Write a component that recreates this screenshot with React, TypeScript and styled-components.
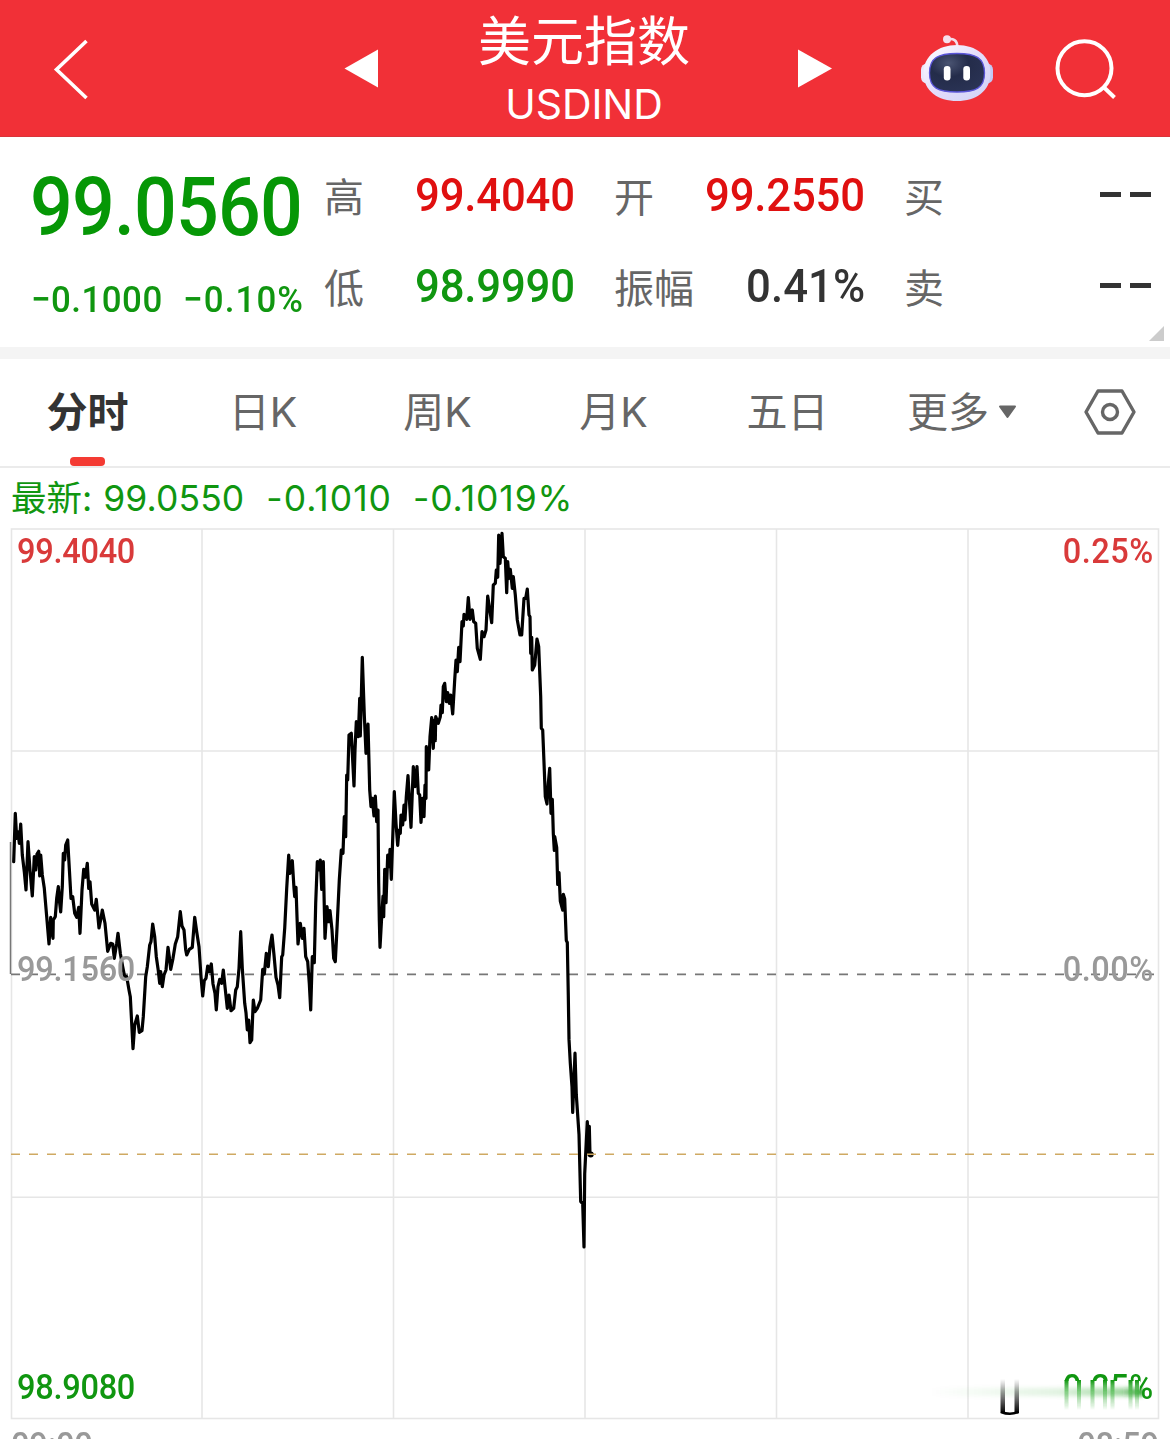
import React from "react";
import styled, { createGlobalStyle } from "styled-components";

const cjk = `"Noto Sans CJK SC", sans-serif`;

const GlobalStyle = createGlobalStyle`
  * { box-sizing: border-box; }
  body { margin: 0; background: #fff; }
  svg { display: block; flex: none; }
`;

const Screen = styled.main`
  width: 1170px;
  height: 1439px;
  overflow: hidden;
  background: #fff;
  font-family: Inter, ${cjk};
`;

/* ---------- header ---------- */
const Header = styled.header`
  height: 137px;
  background: #f13037;
  border-bottom: 1px solid #d9343a;
  color: #fff;
  display: grid;
  grid-template-columns: 344px 35px 1fr 35px 338px;
  align-items: center;
`;
const HeaderSide = styled.div<{ $pad: number; $gap?: number }>`
  display: flex;
  align-items: center;
  padding-left: ${(p) => p.$pad}px;
  gap: ${(p) => p.$gap ?? 0}px;
`;
const TitleBlock = styled.div`
  height: 136px;
  display: flex;
  flex-direction: column;
  align-items: center;
  padding-right: 8px;
`;
const Title = styled.h1`
  margin: 6px 0 0;
  font: 400 53px/64px ${cjk};
`;
const Ticker = styled.div`
  margin-top: 9px;
  font: 400 41px/50px Inter, sans-serif;
  letter-spacing: -0.1px;
`;

/* ---------- quote ---------- */
/* Condensed figures: Roboto squeezed horizontally. */
const squeeze = 0.93;
const Num = styled.span<{ $size: number; $color: string; $track?: number; $from?: "left" | "right" }>`
  display: inline-block;
  font-family: Roboto, sans-serif;
  font-weight: 500;
  font-size: ${(p) => p.$size}px;
  line-height: 1;
  color: ${(p) => p.$color};
  letter-spacing: ${(p) => p.$track ?? 0}px;
  white-space: pre;
  transform: scaleX(${squeeze});
  transform-origin: ${(p) => p.$from ?? "left"} center;
  margin-right: ${(p) => (p.$from === "right" ? -squeeze * (p.$track ?? 0) : 0)}px;
`;
const Quote = styled.section`
  height: 210px;
  display: grid;
  grid-template-columns: 324px 290px 290px 266px;
  position: relative;
`;
const PriceCol = styled.div`
  padding: 30px 0 0 30px;
  display: flex;
  flex-direction: column;
`;
const Changes = styled.div`
  display: flex;
  gap: 10px;
  margin-top: 33px;
  padding-left: 1px;
`;
const StatCol = styled.div<{ $right: number }>`
  padding: 14px ${(p) => p.$right}px 0 0;
`;
const Stat = styled.div`
  height: 91px;
  display: flex;
  align-items: center;
  justify-content: space-between;
`;
const StatLabel = styled.span`
  font: 400 40px/60px ${cjk};
  color: #666;
  padding-bottom: 4px;
`;
const StatValue = styled(Num)`
  padding-bottom: 4px;
`;
const Dashes = styled.span`
  display: flex;
  gap: 9px;
  padding-bottom: 5px;
  &::before, &::after {
    content: "";
    width: 21px;
    height: 5px;
    background: #333;
  }
`;
const Corner = styled.svg`
  position: absolute;
  right: 6px;
  bottom: 6px;
`;
const Band = styled.div`
  height: 12px;
  background: #f4f4f4;
`;

/* ---------- tabs ---------- */
const Tabs = styled.nav`
  height: 109px;
  border-bottom: 2px solid #ebebeb;
  display: grid;
  grid-template-columns: 175px 176px 173px 179px 169px 180px 1fr;
`;
const Tab = styled.div<{ $active?: boolean }>`
  display: flex;
  align-items: center;
  justify-content: center;
  gap: 9px;
  padding-bottom: 2px;
  position: relative;
  font: ${(p) => (p.$active ? 700 : 400)} 41px/60px Inter, ${cjk};
  color: ${(p) => (p.$active ? "#333" : "#666")};
  &::after {
    content: "";
    display: ${(p) => (p.$active ? "block" : "none")};
    position: absolute;
    left: 70px;
    bottom: 0;
    width: 35px;
    height: 9px;
    border-radius: 4px;
    background: #f43b33;
  }
`;
const SettingsTab = styled(Tab)`
  padding-right: 2px;
`;

/* ---------- chart ---------- */
const Latest = styled.div`
  height: 60px;
  padding: 2px 11px 0;
  display: flex;
  align-items: center;
  color: #109610;
  font: 400 35.5px/58px Inter, ${cjk};
  white-space: pre;
`;
const LatestItem = styled.span<{ $left: number; $track?: number }>`
  margin-left: ${(p) => p.$left}px;
  letter-spacing: ${(p) => p.$track ?? 0}px;
`;
const ChartBox = styled.section`
  height: 892px;
  position: relative;
`;
const AxisLabel = styled(Num)<{ $top: number }>`
  position: absolute;
  top: ${(p) => p.$top}px;
  ${(p) => p.$from ?? "left"}: 17px;
`;
const Smear = styled.svg`
  position: absolute;
  left: 920px;
  top: 840px;
`;
const Times = styled.div`
  height: 19px;
  overflow: hidden;
  padding: 8px 11px 0 11px;
  display: flex;
  justify-content: space-between;
`;

/* Intraday trace; every run is stored as x,y pairs in subpixel units from its own origin. */
const runs: { ox: number; oy: number; sx: number; sy: number; d: string }[] = [
  {
    ox: 0, oy: 790, sx: 3, sy: 3,
    d: "41,215 46,70 50,145 54,125 58,160 62,102 67,195 73,245 78,300 84,155 90,240 97,318 103,200 107,240 111,192 116,184 119,258 122,195 127,255 133,295 140,380 147,462 152,382 155,420 159,445 160,390 166,380 170,325 175,290 179,340 182,366 187,290 190,190 194,210 197,165 203,150 208,235 213,325 218,320 224,370 230,382 236,352 240,430 246,300 251,238 256,262 262,220 266,295 270,275 275,342 284,360 289,328 297,414 303,385 307,360 315,400 323,484 332,460 338,462 343,505 350,460 354,430 361,490 368,530 374,560 380,560 387,600 391,620 395,700 399,776 404,705 412,678 418,727 426,722 430,680 437,560 442,530 449,465 453,455 458,402 464,440 469,500 475,542 479,580 482,545 487,590 492,555 498,540 504,472 508,500 512,538 519,505 526,462 533,440 541,365 546,408 552,420 557,480 560,495 568,478 577,472 584,382 590,425 597,470 603,560",
  },
  {
    ox: 190, oy: 640, sx: 3, sy: 3,
    d: "38,1068 43,1022 48,1015 53,978 58,995 64,972 69,1032 75,1060 79,1110 84,1040 89,1018 95,1030 100,990 105,1040 112,1105 117,1065 123,1112 131,1105 137,1050 142,1040 147,985 152,875 157,985 164,1090 168,1118 172,1170 176,1140 180,1208 185,1200 190,1080 195,1115 202,1105 212,1080 218,988 223,1002 229,940 235,980 240,920 246,885 252,945 258,1012 264,1035 269,1073 275,950 278,945 284,865 290,745 296,645 300,700 307,662 312,745 314,770 318,742 321,830 324,912 331,850 337,895 342,865 347,950 353,965 358,1030 362,1110 367,950 373,968 377,790 382,665 386,690 391,660 395,748 400,665 405,895 411,800 416,845 420,812 426,870 431,955 436,965 441,865 448,720 454,630 459,640 463,530 467,590 470,405 473,420 477,285 484,280 492,438 495,330 499,245 505,290 509,175 511,288 517,52 523,225 528,340 534,252 539,450 543,500 547,475 552,528 556,468 560,545 564,510 566,730 568,840 570,922 575,830 579,768 581,830 584,688 588,788 593,645 598,680 600,628 604,718 609,570 613,455 618,550 623,616 627,570 631,580 633,525 638,555 642,495 645,540 649,470",
  },
  {
    ox: 370, oy: 520, sx: 3, sy: 3,
    d: "114,767 123,922 130,740 135,800 141,740 145,820 149,825 153,907 158,835 162,890 165,795 168,835 169,680 176,750 180,650 185,593 190,685 193,600 196,662 197,590 205,610 211,590 213,555 217,578 220,500 224,490 229,545 233,518 238,550 242,525 248,582 254,480 258,420 262,455 266,382 270,425 276,305 280,318 282,283 290,298 295,233 300,298 307,270 311,305 317,310 322,385 331,418 336,335 342,350 348,330 353,228 358,260 365,308 370,195 376,190 379,150 383,172 386,45 390,130 396,40 400,110 406,115 410,218 413,125 417,175 421,148 427,205 430,170 436,225 442,300 450,345 455,345 462,235 467,235 472,207 477,285 480,290 482,400 485,352 487,450 494,435 501,357 506,380 512,530 514,625 518,630 523,750 526,830 531,852 535,790 539,745 543,880 547,838 550,940",
  },
  {
    ox: 520, oy: 640, sx: 3, sy: 2.529,
    d: "103,532 104,497 110,525 113,618 117,588 121,660 128,683 130,643 134,655 139,760 142,765 145,900 147,1010 151,1070 156,1130 158,1195 165,1045 169,1150 177,1250 182,1420 188,1425 192,1535 194,1350 202,1218 206,1300 208,1230 210,1302 216,1300",
  },
];

const tracePoints = runs
  .flatMap((r) =>
    r.d.split(" ").map((pair) => {
      const [x, y] = pair.split(",").map(Number);
      return `${(r.ox + x / r.sx).toFixed(1)},${(r.oy + y / r.sy - 528).toFixed(1)}`;
    })
  )
  .join(" ");

const RobotIcon = () => (
  <svg width="74" height="70" viewBox="920 33 74 70">
    <defs>
      <linearGradient id="shell" x1="0" y1="0" x2="1" y2="1">
        <stop offset="0" stopColor="#fff" />
        <stop offset="0.5" stopColor="#e4dcfb" />
        <stop offset="1" stopColor="#cfd3f6" />
      </linearGradient>
      <radialGradient id="visor" cx="0.35" cy="0.25" r="0.8">
        <stop offset="0" stopColor="#4a5472" />
        <stop offset="0.45" stopColor="#242c4a" />
        <stop offset="1" stopColor="#2a3355" />
      </radialGradient>
    </defs>
    <path d="M947 39.5C953 38 957.5 40 957.3 47" fill="none" stroke="#f3dcea" strokeWidth="2.6" />
    <circle cx="947" cy="39.3" r="4" fill="#f6dfec" />
    <rect x="921" y="63.500" width="14" height="20" rx="6" fill="#ebe7fb" />
    <rect x="978" y="63.500" width="15" height="20" rx="6" fill="#c3c8f5" />
    <path d="M957 45C976 45 990.500 56 990.500 73C990.500 91 976 101 957 101C938 101 923.500 91 923.500 73C923.500 56 938 45 957 45Z" fill="url(#shell)" />
    <path d="M957 53.500C976 53.500 984.500 58 984.500 73C984.500 88 976 92 957 92C938 92 929.500 88 929.500 73C929.500 58 938 53.500 957 53.500Z" fill="url(#visor)" stroke="#5a55d8" strokeWidth="1.300" />
    <rect x="943.800" y="66" width="6.700" height="14.500" rx="3.300" fill="#fff" />
    <rect x="963.300" y="66" width="6.700" height="14.500" rx="3.300" fill="#fff" />
  </svg>
);

const green = "#109610";

export default function App() {
  return (
    <Screen>
      <GlobalStyle />
      <Header>
        <HeaderSide $pad={52}>
          <svg width="38" height="64" viewBox="52 36.5 38 64" fill="none" stroke="#fff" strokeWidth="3.6">
            <path d="M86.500 41.500L56.500 70L86.500 98.500" />
          </svg>
        </HeaderSide>
        <svg width="35" height="40" viewBox="344 48.5 35 40" fill="#fff">
          <path d="M344.500 69L378 50V88Z" />
        </svg>
        <TitleBlock>
          <Title>美元指数</Title>
          <Ticker>USDIND</Ticker>
        </TitleBlock>
        <svg width="35" height="40" viewBox="797 48.5 35 40" fill="#fff">
          <path d="M798 50L832 69L798 88Z" />
        </svg>
        <HeaderSide $pad={88} $gap={58}>
          <RobotIcon />
          <svg width="66" height="66" viewBox="1052 35.5 66 66" fill="none" stroke="#fff" strokeWidth="4">
            <circle cx="1084.500" cy="68.800" r="27" />
            <path d="M1103.500 87.500L1114.500 98" />
          </svg>
        </HeaderSide>
      </Header>

      <Quote>
        <PriceCol>
          <Num $size={81} $color="#069706" $track={-0.9}>99.0560</Num>
          <Changes>
            <Num $size={37.5} $color={green} $track={0.5}>−0.1000</Num>
            <Num $size={37.5} $color={green} $track={1.2}>−0.10%</Num>
          </Changes>
        </PriceCol>
        <StatCol $right={39}>
          <Stat>
            <StatLabel>高</StatLabel>
            <StatValue $from="right" $size={47} $color="#e01010" $track={-0.2}>99.4040</StatValue>
          </Stat>
          <Stat>
            <StatLabel>低</StatLabel>
            <StatValue $from="right" $size={47} $color={green} $track={-0.2}>98.9990</StatValue>
          </Stat>
        </StatCol>
        <StatCol $right={39}>
          <Stat>
            <StatLabel>开</StatLabel>
            <StatValue $from="right" $size={47} $color="#e01010" $track={-0.2}>99.2550</StatValue>
          </Stat>
          <Stat>
            <StatLabel>振幅</StatLabel>
            <StatValue $from="right" $size={47} $color="#333" $track={0.1}>0.41%</StatValue>
          </Stat>
        </StatCol>
        <StatCol $right={19}>
          <Stat>
            <StatLabel>买</StatLabel>
            <Dashes />
          </Stat>
          <Stat>
            <StatLabel>卖</StatLabel>
            <Dashes />
          </Stat>
        </StatCol>
        <Corner width="15" height="15" viewBox="0 0 15 15">
          <path d="M0 15L15 0V15Z" fill="#ccc" />
        </Corner>
      </Quote>
      <Band />

      <Tabs>
        <Tab $active>分时</Tab>
        <Tab>日K</Tab>
        <Tab>周K</Tab>
        <Tab>月K</Tab>
        <Tab>五日</Tab>
        <Tab>
          更多
          <svg width="19" height="14" viewBox="0 0 19 14">
            <path d="M2 1.500H17L9.500 12Z" fill="#666" stroke="#666" strokeWidth="2" strokeLinejoin="round" />
          </svg>
        </Tab>
        <SettingsTab>
          <svg width="54" height="48" viewBox="0 0 54 48" fill="none" stroke="#666" strokeWidth="3.4" strokeLinejoin="round">
            <path d="M15 3H39L51 24L39 45H15L3 24Z" />
            <circle cx="27" cy="24" r="7.500" />
          </svg>
        </SettingsTab>
      </Tabs>

      <Latest>
        <LatestItem $left={0}>最新:</LatestItem>
        <LatestItem $left={11} $track={0.1}>99.0550</LatestItem>
        <LatestItem $left={22} $track={1}>-0.1010</LatestItem>
        <LatestItem $left={21} $track={0.9}>-0.1019%</LatestItem>
      </Latest>

      <ChartBox>
        <svg width="1170" height="892" viewBox="0 0 1170 892" fill="none">
          <g stroke="#e6e6e6" strokeWidth="1.6">
            <rect x="11.500" y="1" width="1147" height="889.500" />
            {[202, 393.5, 585, 776.5, 968].map((x) => (
              <path key={x} d={`M${x} 1V890`} />
            ))}
            <path d="M11 223H1159M11 669.300H1159" />
          </g>
          <path d="M11 446.300H1156" stroke="#777" strokeWidth="1.7" strokeDasharray="9 9" />
          <path d="M10.500 314V446" stroke="#777" strokeWidth="1.5" />
          <polyline points={tracePoints} stroke="#000" strokeWidth="3.2" strokeLinejoin="round" strokeLinecap="round" />
          <circle cx="590.700" cy="626.500" r="3" fill="#000" />
          <path d="M11 626.300H1156" stroke="#cfa962" strokeWidth="1.5" strokeDasharray="9 9" />
        </svg>
        <AxisLabel $size={35} $color="#d93a3a" $track={-0.3} $top={6}>99.4040</AxisLabel>
        <AxisLabel $size={35} $color="#d93a3a" $track={0.5} $top={6} $from="right">0.25%</AxisLabel>
        <AxisLabel $size={35} $color="#999" $track={-0.3} $top={424}>99.1560</AxisLabel>
        <AxisLabel $size={35} $color="#999" $track={0.5} $top={424} $from="right">0.00%</AxisLabel>
        <AxisLabel $size={35} $color={green} $track={-0.3} $top={842}>98.9080</AxisLabel>
        <AxisLabel $size={35} $color={green} $track={0.5} $top={842} $from="right">0.25%</AxisLabel>
        <Smear width="236" height="50" viewBox="920 1368 236 50">
          <defs>
            <linearGradient id="band" x1="0" x2="1" y1="0" y2="0">
              <stop offset="0" stopColor="#109610" stopOpacity="0" />
              <stop offset="0.6" stopColor="#109610" stopOpacity="0.12" />
              <stop offset="0.9" stopColor="#109610" stopOpacity="0.38" />
              <stop offset="1" stopColor="#109610" stopOpacity="0.85" />
            </linearGradient>
            <linearGradient id="drip" x1="0" x2="0" y1="0" y2="1">
              <stop offset="0" stopColor="#109610" />
              <stop offset="0.4" stopColor="#3fb53f" stopOpacity="0.55" />
              <stop offset="1" stopColor="#109610" stopOpacity="0" />
            </linearGradient>
            <linearGradient id="ink" x1="0" x2="0" y1="0" y2="1">
              <stop offset="0" stopColor="#000" stopOpacity="0" />
              <stop offset="1" stopColor="#000" />
            </linearGradient>
            <filter id="soft" x="-20%" y="-60%" width="140%" height="220%">
              <feGaussianBlur stdDeviation="1.2 2.2" />
            </filter>
            <filter id="side" x="-100%" y="0%" width="300%" height="100%">
              <feGaussianBlur stdDeviation="0.7 0" />
            </filter>
          </defs>
          <rect x="1060" y="1381" width="80" height="21" fill="#fff" />
          <rect x="930" y="1388" width="213" height="8" fill="url(#band)" filter="url(#soft)" />
          {[1064.5, 1077, 1090.5, 1103, 1110.5, 1128.5, 1135].map((x) => (
            <rect key={x} x={x} y="1380" width="4" height="30" fill="url(#drip)" filter="url(#side)" />
          ))}
          <rect x="1000.500" y="1379" width="4.500" height="34" fill="url(#ink)" filter="url(#side)" />
          <rect x="1014.500" y="1379" width="4.500" height="34" fill="url(#ink)" filter="url(#side)" />
          <path d="M1001 1412Q1010 1415.500 1018.500 1412" fill="none" stroke="#000" strokeWidth="2.500" />
        </Smear>
      </ChartBox>
      <Times>
        <Num $size={35} $color="#999" $track={-0.2}>09:00</Num>
        <Num $size={35} $color="#999" $track={-0.2} $from="right">08:59</Num>
      </Times>
    </Screen>
  );
}
